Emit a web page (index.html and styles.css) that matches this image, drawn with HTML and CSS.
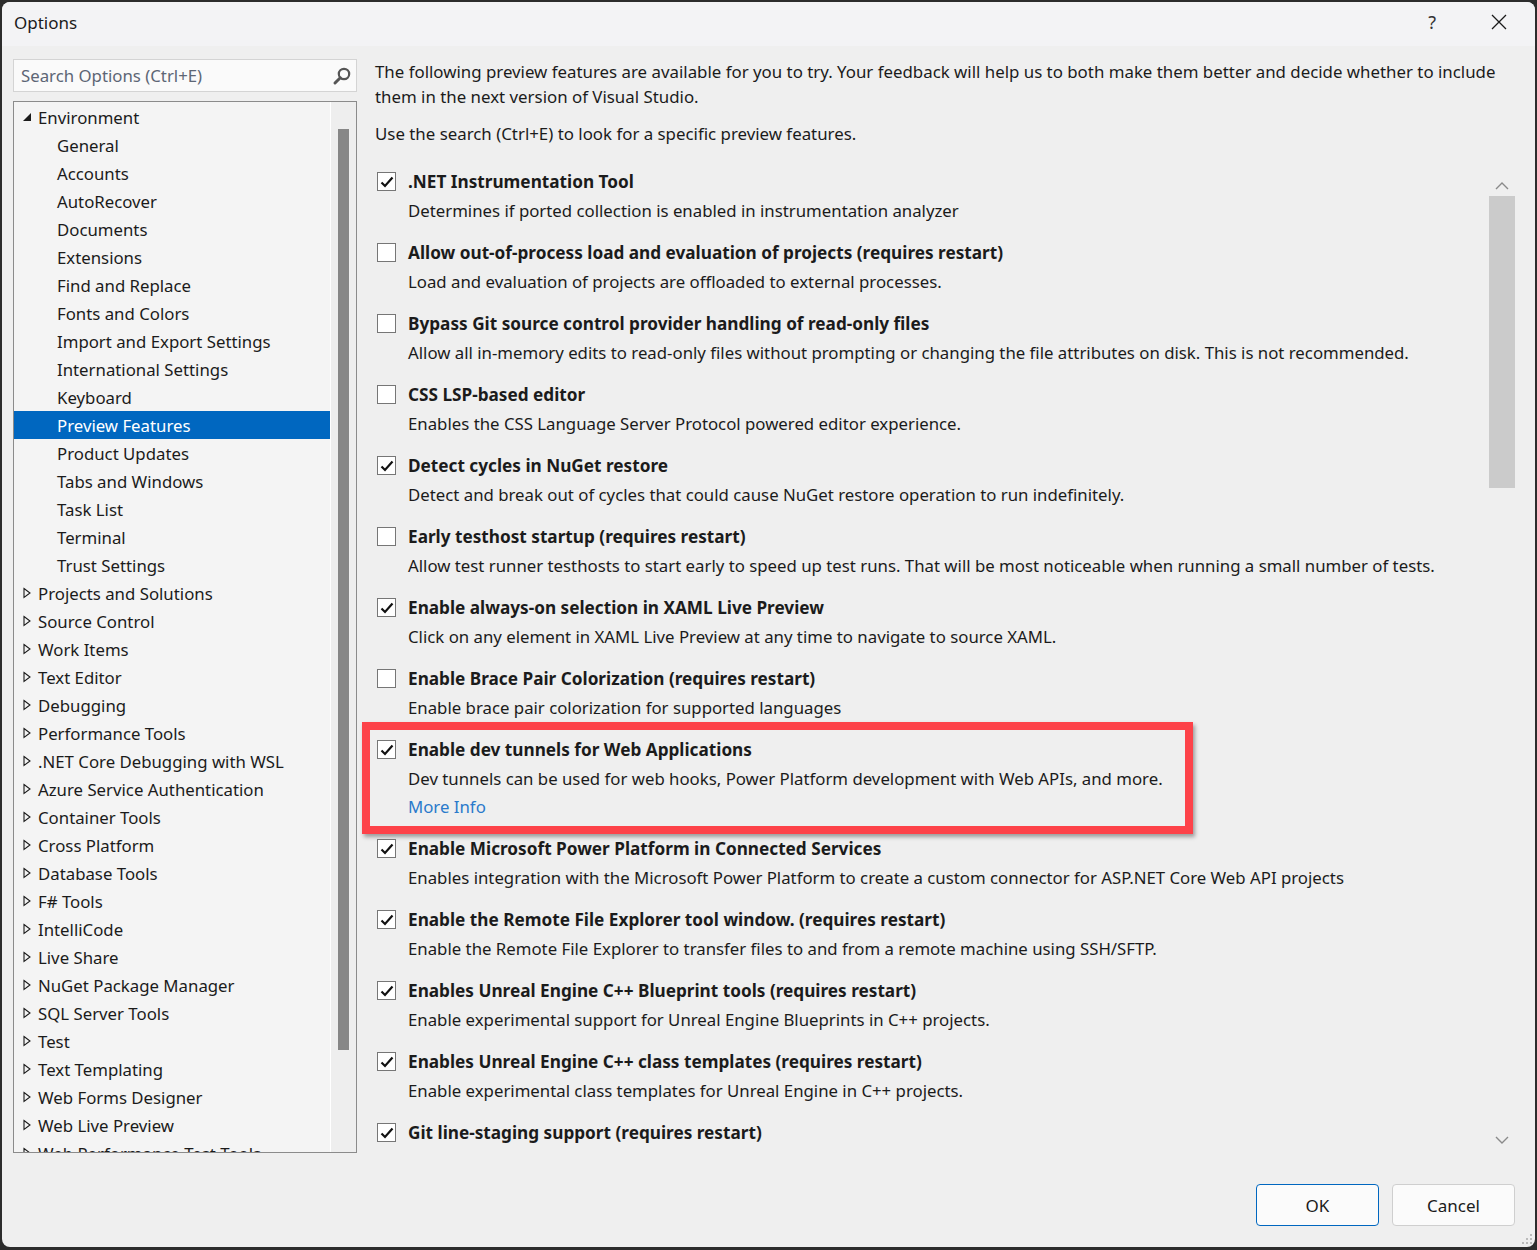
FILE: index.html
```html
<!DOCTYPE html>
<html lang="en">
  <head>
    <meta charset="UTF-8" />
    <title>Options</title>
    <link rel="stylesheet" href="styles.css">
  </head>
  <body>
    <div class="window">
      <div class="titlebar">
        <span class="title">Options</span>
        <span class="help">?</span>
        <svg class="close" width="16" height="16" viewBox="0 0 16 16"><path d="M1 1L15 15M15 1L1 15" stroke="#1a1a1a" stroke-width="1.3"/></svg>
      </div>

      <div class="main">
        <!-- left side: search + tree -->
        <div class="sidebar">
          <div class="search">
            <span class="search-text">Search Options (Ctrl+E)</span>
            <svg class="search-icon" width="20" height="20" viewBox="0 0 20 20"><circle cx="12" cy="8" r="5.2" fill="none" stroke="#555" stroke-width="2.2"/><path d="M8.3 11.8L3 17" stroke="#555" stroke-width="3" stroke-linecap="round"/></svg>
          </div>
          <div class="tree">
            <div class="tree-items" id="tree"></div>
            <div class="tree-scroll"><div class="tree-thumb"></div></div>
          </div>
        </div>

        <!-- right side: preview features -->
        <div class="content">
          <p class="intro">The following preview features are available for you to try. Your feedback will help us to both make them better and decide whether to include them in the next version of Visual Studio.</p>
          <p class="intro hint">Use the search (Ctrl+E) to look for a specific preview features.</p>
          <div class="features-wrap">
            <div class="features" id="features"></div>
            <div class="vscroll">
              <svg class="chev" width="14" height="8" viewBox="0 0 14 8"><path d="M1 7L7 1L13 7" fill="none" stroke="#8a8a8a" stroke-width="1.4"/></svg>
              <div class="vthumb"></div>
              <div class="vspace"></div>
              <svg class="chev" width="14" height="8" viewBox="0 0 14 8"><path d="M1 1L7 7L13 1" fill="none" stroke="#8a8a8a" stroke-width="1.4"/></svg>
            </div>
          </div>
          <div class="buttons">
            <button class="btn primary">OK</button>
            <button class="btn">Cancel</button>
          </div>
        </div>
      </div>
      <svg class="grip" width="12" height="12" viewBox="0 0 12 12"><g fill="#bbb"><rect x="9" y="1" width="2" height="2"/><rect x="5" y="5" width="2" height="2"/><rect x="9" y="5" width="2" height="2"/><rect x="1" y="9" width="2" height="2"/><rect x="5" y="9" width="2" height="2"/><rect x="9" y="9" width="2" height="2"/></g></svg>
    </div>

    <script src="app.js"></script>
  </body>
</html>
```

FILE: styles.css
```css
body {
  margin: 0;
  background: #2c2c2c;
  font-family: "Noto Sans", sans-serif;
  color: #1b1b1b;
}
.window {
  margin: 2px 2px 3px 2px;
  height: 1245px;
  background: #efefef;
  border-radius: 8px;
  overflow: hidden;
  position: relative;
}
.titlebar {
  height: 44px;
  background: #f3f3f5;
  display: flex;
  align-items: center;
  padding-left: 12px;
  padding-right: 28px;
  padding-bottom: 4px;
  box-sizing: border-box;
}
.title {
  font-size: 17px;
  flex: 1;
}
.help {
  font-size: 18px;
  color: #333;
  margin-right: 55px;
}
.main {
  display: flex;
  padding: 13px 20px 0 11px;
}
.sidebar {
  width: 344px;
  flex-shrink: 0;
}
.search {
  height: 31px;
  border: 1px solid #d4d4d4;
  background: #fafafa;
  display: flex;
  align-items: center;
  padding: 0 4px 0 7px;
}
.search-text {
  flex: 1;
  font-size: 16.8px;
  color: #5d6675;
}
.tree {
  margin-top: 9px;
  height: 1050px;
  border: 1px solid #8b8b8b;
  background: #f4f4f4;
  display: flex;
  overflow: hidden;
}
.tree-items {
  flex: 1;
  padding-top: 1px;
}
.tree-row {
  height: 28px;
  display: flex;
  align-items: center;
  font-size: 16.8px;
  white-space: nowrap;
}
.tree-row svg {
  width: 10px;
  margin-left: 8px;
  margin-right: 6px;
}
.tree-row.child {
  padding-left: 43px;
}
.tree-row.selected {
  background: #0067c0;
  color: #fff;
}
.tree-scroll {
  width: 25px;
  border-left: 1px solid #fff;
  background: #eeeeee;
  flex-shrink: 0;
}
.tree-thumb {
  width: 11px;
  margin: 27px 0 0 7px;
  height: 921px;
  background: #878787;
}
.content {
  flex: 1;
  margin-left: 18px;
}
.intro {
  margin: 0;
  font-size: 16.85px;
  line-height: 25px;
}
.hint {
  margin-top: 12px;
}
/* wide left padding so the red box is not clipped */
.features-wrap {
  display: flex;
  margin-top: 21px;
  margin-left: -20px;
  padding-left: 20px;
  height: 983px;
  overflow: hidden;
}
.features {
  flex: 1;
  padding-left: 2px;
}
.feature {
  position: relative;
  margin-bottom: 13px;
}
.feature-title {
  display: flex;
  align-items: center;
  height: 29px;
  font-size: 17.2px;
  font-weight: bold;
}
.check {
  width: 17px;
  height: 17px;
  border: 1px solid #767676;
  background: #fff;
  margin-right: 12px;
  display: flex;
  align-items: center;
  justify-content: center;
}
.feature-desc,
.more-info {
  padding-left: 31px;
  height: 29px;
  line-height: 29px;
  font-size: 16.8px;
}
.more-info {
  height: 28px;
  line-height: 28px;
  color: #2a7acb;
}
.highlight {
  position: absolute;
  left: -15px;
  top: -13px;
  width: 815px;
  height: 96px;
  border: 8px solid #fd4249;
  box-shadow: 2px 3px 4px rgba(0, 0, 0, 0.35);
  pointer-events: none;
}
.vscroll {
  width: 26px;
  display: flex;
  flex-direction: column;
  align-items: center;
  padding-top: 15px;
}
.vthumb {
  width: 26px;
  height: 292px;
  margin-top: 6px;
  background: #cbcbcb;
}
.vspace {
  flex: 1;
}
.chev {
  flex-shrink: 0;
}
.vscroll .chev:last-child {
  margin-bottom: 6px;
}
.buttons {
  display: flex;
  justify-content: flex-end;
  gap: 13px;
  margin-top: 34px;
}
.btn {
  width: 123px;
  height: 42px;
  border: 1px solid #cfcfcf;
  border-radius: 4px;
  background: #fbfbfb;
  font-family: "Noto Sans", sans-serif;
  font-size: 17px;
  color: #1b1b1b;
}
.btn.primary {
  border-color: #0067c0;
}
.grip {
  position: absolute;
  right: 2px;
  bottom: 2px;
}
```

FILE: app.js
```js
// tree on the left
const treeData = [
  ["Environment", "open"],
  ["General", "child"], ["Accounts", "child"], ["AutoRecover", "child"],
  ["Documents", "child"], ["Extensions", "child"], ["Find and Replace", "child"],
  ["Fonts and Colors", "child"], ["Import and Export Settings", "child"],
  ["International Settings", "child"], ["Keyboard", "child"],
  ["Preview Features", "child selected"], ["Product Updates", "child"],
  ["Tabs and Windows", "child"], ["Task List", "child"], ["Terminal", "child"],
  ["Trust Settings", "child"],
  ["Projects and Solutions"], ["Source Control"], ["Work Items"], ["Text Editor"],
  ["Debugging"], ["Performance Tools"], [".NET Core Debugging with WSL"],
  ["Azure Service Authentication"], ["Container Tools"], ["Cross Platform"],
  ["Database Tools"], ["F# Tools"], ["IntelliCode"], ["Live Share"],
  ["NuGet Package Manager"], ["SQL Server Tools"], ["Test"], ["Text Templating"],
  ["Web Forms Designer"], ["Web Live Preview"], ["Web Performance Test Tools"]
];

const openArrow = '<svg height="10" viewBox="0 0 10 10"><path d="M1 9L9 1L9 9Z" fill="#1b1b1b"/></svg>';
const closedArrow = '<svg height="12" viewBox="0 0 10 12"><path d="M2 1.5L8 6L2 10.5Z" fill="none" stroke="#1b1b1b" stroke-width="1.1"/></svg>';

const tree = document.getElementById("tree");
treeData.forEach((item) => {
  const row = document.createElement("div");
  const kind = item[1] || "";
  row.className = "tree-row " + kind;
  let icon = "";
  if (kind === "open") icon = openArrow;
  else if (!kind.includes("child")) icon = closedArrow;
  row.innerHTML = icon + "<span>" + item[0] + "</span>";
  tree.appendChild(row);
});

// preview features list (last one is scrolled off, only its title shows)
const features = [
  [true, ".NET Instrumentation Tool", "Determines if ported collection is enabled in instrumentation analyzer"],
  [false, "Allow out-of-process load and evaluation of projects (requires restart)", "Load and evaluation of projects are offloaded to external processes."],
  [false, "Bypass Git source control provider handling of read-only files", "Allow all in-memory edits to read-only files without prompting or changing the file attributes on disk. This is not recommended."],
  [false, "CSS LSP-based editor", "Enables the CSS Language Server Protocol powered editor experience."],
  [true, "Detect cycles in NuGet restore", "Detect and break out of cycles that could cause NuGet restore operation to run indefinitely."],
  [false, "Early testhost startup (requires restart)", "Allow test runner testhosts to start early to speed up test runs. That will be most noticeable when running a small number of tests."],
  [true, "Enable always-on selection in XAML Live Preview", "Click on any element in XAML Live Preview at any time to navigate to source XAML."],
  [false, "Enable Brace Pair Colorization (requires restart)", "Enable brace pair colorization for supported languages"],
  [true, "Enable dev tunnels for Web Applications", "Dev tunnels can be used for web hooks, Power Platform development with Web APIs, and more.", true],
  [true, "Enable Microsoft Power Platform in Connected Services", "Enables integration with the Microsoft Power Platform to create a custom connector for ASP.NET Core Web API projects"],
  [true, "Enable the Remote File Explorer tool window. (requires restart)", "Enable the Remote File Explorer to transfer files to and from a remote machine using SSH/SFTP."],
  [true, "Enables Unreal Engine C++ Blueprint tools (requires restart)", "Enable experimental support for Unreal Engine Blueprints in C++ projects."],
  [true, "Enables Unreal Engine C++ class templates (requires restart)", "Enable experimental class templates for Unreal Engine in C++ projects."],
  [true, "Git line-staging support (requires restart)", ""]
];

const checkMark = '<svg width="14" height="12" viewBox="0 0 14 12"><path d="M1.5 6.5L5 10L12.5 1.5" fill="none" stroke="#111" stroke-width="2.2"/></svg>';

const list = document.getElementById("features");
features.forEach((f) => {
  const el = document.createElement("div");
  el.className = "feature";
  let html = '<div class="feature-title"><span class="check">' + (f[0] ? checkMark : "") + "</span>" + f[1] + "</div>";
  if (f[2]) html += '<div class="feature-desc">' + f[2] + "</div>";
  if (f[3]) {
    html += '<div class="more-info">More Info</div><div class="highlight"></div>';
  }
  el.innerHTML = html;
  list.appendChild(el);
});
```
